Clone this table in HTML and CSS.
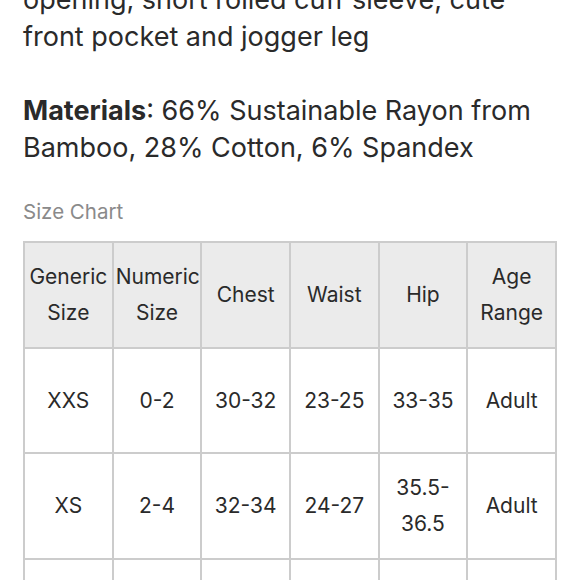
FILE: index.html
```html
<!DOCTYPE html>
<html lang="en">
<head>
<meta charset="utf-8">
<link rel="stylesheet" href="styles.css">
<title>Size Chart</title>
</head>
<body>
<div class="page">
  <p class="desc">opening, short rolled cuff sleeve, cute<br>front pocket and jogger leg</p>
  <p class="desc"><strong>Materials</strong>: 66% Sustainable Rayon from Bamboo, 28% Cotton, 6% Spandex</p>
  <div class="chart-label">Size Chart</div>
  <table class="size-table">
    <thead>
      <tr>
        <th>Generic Size</th>
        <th>Numeric Size</th>
        <th>Chest</th>
        <th>Waist</th>
        <th>Hip</th>
        <th>Age Range</th>
      </tr>
    </thead>
    <tbody>
      <tr>
        <td>XXS</td>
        <td>0-2</td>
        <td>30-32</td>
        <td>23-25</td>
        <td>33-35</td>
        <td>Adult</td>
      </tr>
      <tr>
        <td>XS</td>
        <td>2-4</td>
        <td>32-34</td>
        <td>24-27</td>
        <td>35.5-36.5</td>
        <td>Adult</td>
      </tr>
      <tr>
        <td>S</td>
        <td>4-6</td>
        <td>34-36</td>
        <td>27-29</td>
        <td>36.5-38.5</td>
        <td>Adult</td>
      </tr>
    </tbody>
  </table>
</div>
</body>
</html>
```

FILE: styles.css
```css
html, body {
  margin: 0;
  padding: 0;
  background: #ffffff;
}

body {
  font-family: Inter, "Liberation Sans", sans-serif;
  color: #2a2a2a;
  overflow: hidden;
}

.page {
  margin-top: -19px;
  padding: 0 22px 0 23px;
}

.desc {
  margin: 0 0 37px 0;
  font-size: 27px;
  line-height: 37px;
}

.desc strong {
  font-weight: 700;
}

.chart-label {
  font-size: 20.5px;
  line-height: 24px;
  color: #8a8a8a;
  margin-top: -3px;
  margin-bottom: 17px;
}

.size-table {
  width: 534px;
  table-layout: fixed;
  border-collapse: collapse;
  font-size: 21px;
  line-height: 36px;
  text-align: center;
}

.size-table th,
.size-table td {
  border: 2px solid #cccccc;
  padding: 16px 2px;
  height: 71px;
  vertical-align: middle;
}

.size-table th {
  background: #ebebeb;
  font-weight: 400;
}
```
